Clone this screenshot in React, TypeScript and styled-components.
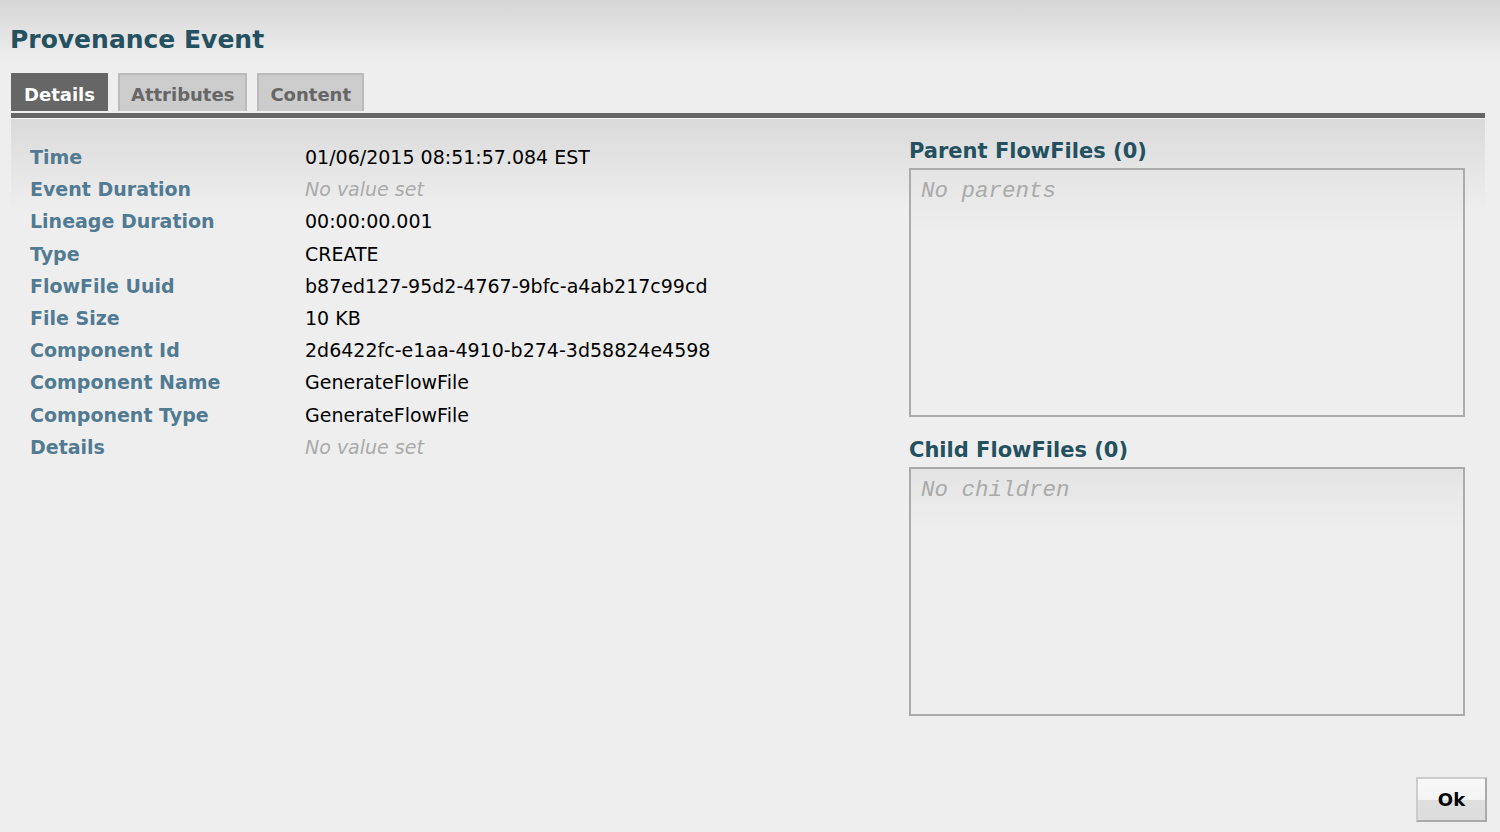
import React from "react";
import styled, { createGlobalStyle } from "styled-components";

const GlobalStyle = createGlobalStyle`
  html, body {
    margin: 0;
    padding: 0;
    background: #eeeeee;
  }
  body {
    font-family: "DejaVu Sans", Verdana, sans-serif;
  }
`;

const Page = styled.div`
  width: 1500px;
  height: 832px;
  display: flex;
  flex-direction: column;
  background: #eeeeee;
  overflow: hidden;
`;

const Header = styled.div`
  background: linear-gradient(to bottom, #d6d6d6 0px, #eeeeee 60px);
  padding: 24px 10px 0 10px;
`;

const Title = styled.h1`
  margin: 0;
  font-size: 25px;
  line-height: 32px;
  font-weight: bold;
  color: #24505f;
`;

const Tabs = styled.div`
  display: flex;
  gap: 10px;
  margin: 17px 0 0 1px;
`;

const Tab = styled.div<{ $active?: boolean }>`
  height: 38px;
  box-sizing: border-box;
  padding: 3px 11px 0 11px;
  display: flex;
  align-items: center;
  font-size: 18px;
  font-weight: bold;
  color: ${(p) => (p.$active ? "#ffffff" : "#666666")};
  background: ${(p) => (p.$active ? "#666666" : "#cccccc")};
  border: 2px solid ${(p) => (p.$active ? "#666666" : "#bbbbbb")};
  border-bottom: none;
`;

const TabBar = styled.div`
  margin: 2px 15px 0 11px;
  height: 5px;
  background: #666666;
  border-bottom: 1px solid #f4f4f4;
`;

const Panel = styled.div`
  flex: 1;
  margin: 0 15px 0 11px;
  background: linear-gradient(to bottom, #dadada 0px, #eeeeee 90px, #eeeeee 100%);
  display: grid;
  grid-template-columns: 1fr 556px;
  column-gap: 20px;
  padding: 22px 20px 0 19px;
`;

const DetailList = styled.div`
  display: flex;
  flex-direction: column;
`;

const Row = styled.div`
  display: grid;
  grid-template-columns: 275px 1fr;
  height: 32.2px;
  align-items: center;
`;

const Label = styled.div`
  font-size: 19px;
  font-weight: bold;
  color: #517a93;
`;

const Value = styled.div<{ $empty?: boolean }>`
  font-size: 19px;
  color: ${(p) => (p.$empty ? "#aaaaaa" : "#000000")};
  font-style: ${(p) => (p.$empty ? "italic" : "normal")};
`;

const FlowFiles = styled.div`
  display: flex;
  flex-direction: column;
  margin-top: -8px;
`;

const SectionTitle = styled.div`
  font-size: 21px;
  font-weight: bold;
  color: #24505f;
  height: 35px;
  display: flex;
  align-items: center;
`;

const ListBox = styled.div`
  height: 249px;
  box-sizing: border-box;
  border: 2px solid #ababab;
  background: linear-gradient(to bottom, #e4e4e4 0px, #eeeeee 60px);
  padding: 7px 10px;
  margin-bottom: 15px;
  font-family: "Liberation Mono", "Courier New", monospace;
  font-style: italic;
  font-size: 22.5px;
  line-height: 28px;
  color: #aaaaaa;
`;

const Footer = styled.div`
  display: flex;
  justify-content: flex-end;
  padding: 0 13px 10px 0;
`;

const OkButton = styled.button`
  width: 71px;
  height: 45px;
  border: 2px solid #aaaaaa;
  border-top-color: #cccccc;
  border-left-color: #cccccc;
  background: linear-gradient(to bottom, #f8f8f8 0%, #f4f4f4 50%, #dedede 51%, #dddddd 100%);
  font-family: "DejaVu Sans", Verdana, sans-serif;
  font-size: 18px;
  font-weight: bold;
  color: #000000;
  cursor: pointer;
`;

const details: { label: string; value?: string }[] = [
  { label: "Time", value: "01/06/2015 08:51:57.084 EST" },
  { label: "Event Duration" },
  { label: "Lineage Duration", value: "00:00:00.001" },
  { label: "Type", value: "CREATE" },
  { label: "FlowFile Uuid", value: "b87ed127-95d2-4767-9bfc-a4ab217c99cd" },
  { label: "File Size", value: "10 KB" },
  { label: "Component Id", value: "2d6422fc-e1aa-4910-b274-3d58824e4598" },
  { label: "Component Name", value: "GenerateFlowFile" },
  { label: "Component Type", value: "GenerateFlowFile" },
  { label: "Details" },
];

const App: React.FC = () => {
  return (
    <Page>
      <GlobalStyle />
      <Header>
        <Title>Provenance Event</Title>
        <Tabs>
          <Tab $active>Details</Tab>
          <Tab>Attributes</Tab>
          <Tab>Content</Tab>
        </Tabs>
      </Header>
      <TabBar />
      <Panel>
        <DetailList>
          {details.map((d) => (
            <Row key={d.label}>
              <Label>{d.label}</Label>
              {d.value ? <Value>{d.value}</Value> : <Value $empty>No value set</Value>}
            </Row>
          ))}
        </DetailList>
        <FlowFiles>
          <SectionTitle>Parent FlowFiles (0)</SectionTitle>
          <ListBox>No parents</ListBox>
          <SectionTitle>Child FlowFiles (0)</SectionTitle>
          <ListBox>No children</ListBox>
        </FlowFiles>
      </Panel>
      <Footer>
        <OkButton>Ok</OkButton>
      </Footer>
    </Page>
  );
};

export default App;
